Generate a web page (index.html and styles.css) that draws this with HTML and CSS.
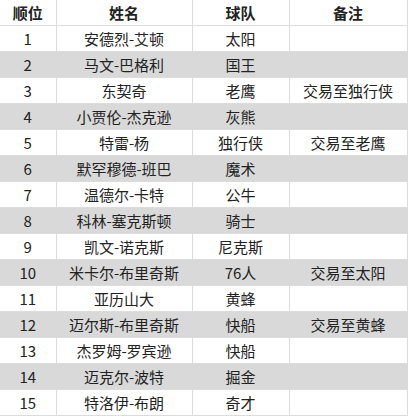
FILE: index.html
```html
<!DOCTYPE html>
<html lang="zh">
<head>
<meta charset="utf-8">
<link rel="stylesheet" href="styles.css">
</head>
<body>
<table class="rank">
  <colgroup>
    <col class="c1"><col class="c2"><col class="c3"><col class="c4">
  </colgroup>
  <thead>
    <tr><th>顺位</th><th>姓名</th><th>球队</th><th>备注</th></tr>
  </thead>
  <tbody>
    <tr><td>1</td><td>安德烈-艾顿</td><td>太阳</td><td></td></tr>
    <tr class="alt"><td>2</td><td>马文-巴格利</td><td>国王</td><td></td></tr>
    <tr><td>3</td><td>东契奇</td><td>老鹰</td><td>交易至独行侠</td></tr>
    <tr class="alt"><td>4</td><td>小贾伦-杰克逊</td><td>灰熊</td><td></td></tr>
    <tr><td>5</td><td>特雷-杨</td><td>独行侠</td><td>交易至老鹰</td></tr>
    <tr class="alt"><td>6</td><td>默罕穆德-班巴</td><td>魔术</td><td></td></tr>
    <tr><td>7</td><td>温德尔-卡特</td><td>公牛</td><td></td></tr>
    <tr class="alt"><td>8</td><td>科林-塞克斯顿</td><td>骑士</td><td></td></tr>
    <tr><td>9</td><td>凯文-诺克斯</td><td>尼克斯</td><td></td></tr>
    <tr class="alt"><td>10</td><td>米卡尔-布里奇斯</td><td>76人</td><td>交易至太阳</td></tr>
    <tr><td>11</td><td>亚历山大</td><td>黄蜂</td><td></td></tr>
    <tr class="alt"><td>12</td><td>迈尔斯-布里奇斯</td><td>快船</td><td>交易至黄蜂</td></tr>
    <tr><td>13</td><td>杰罗姆-罗宾逊</td><td>快船</td><td></td></tr>
    <tr class="alt"><td>14</td><td>迈克尔-波特</td><td>掘金</td><td></td></tr>
    <tr><td>15</td><td>特洛伊-布朗</td><td>奇才</td><td></td></tr>
  </tbody>
</table>
</body>
</html>
```
FILE: styles.css
```css
html, body {
  margin: 0;
  padding: 0;
  background: #ffffff;
}
.rank {
  border-collapse: collapse;
  table-layout: fixed;
  width: 407px;
  font-family: "Noto Sans CJK SC", "Noto Sans", sans-serif;
  font-size: 15px;
  color: #222222;
}
.c1 { width: 56px; }
.c2 { width: 136px; }
.c3 { width: 97px; }
.c4 { width: 118px; }
.rank th, .rank td {
  height: 25px;
  padding: 0;
  text-align: center;
  vertical-align: middle;
  border: 1px solid #dcdcdc;
  line-height: 25px;
  white-space: nowrap;
}
.rank tr > :first-child { border-left: none; }
.rank thead tr > * { border-top: none; }
.rank th {
  font-weight: bold;
  background: #ffffff;
}
.rank tr.alt td {
  background: #d9d9d9;
  border-left-color: #d9d9d9;
  border-right-color: #d9d9d9;
}
```
